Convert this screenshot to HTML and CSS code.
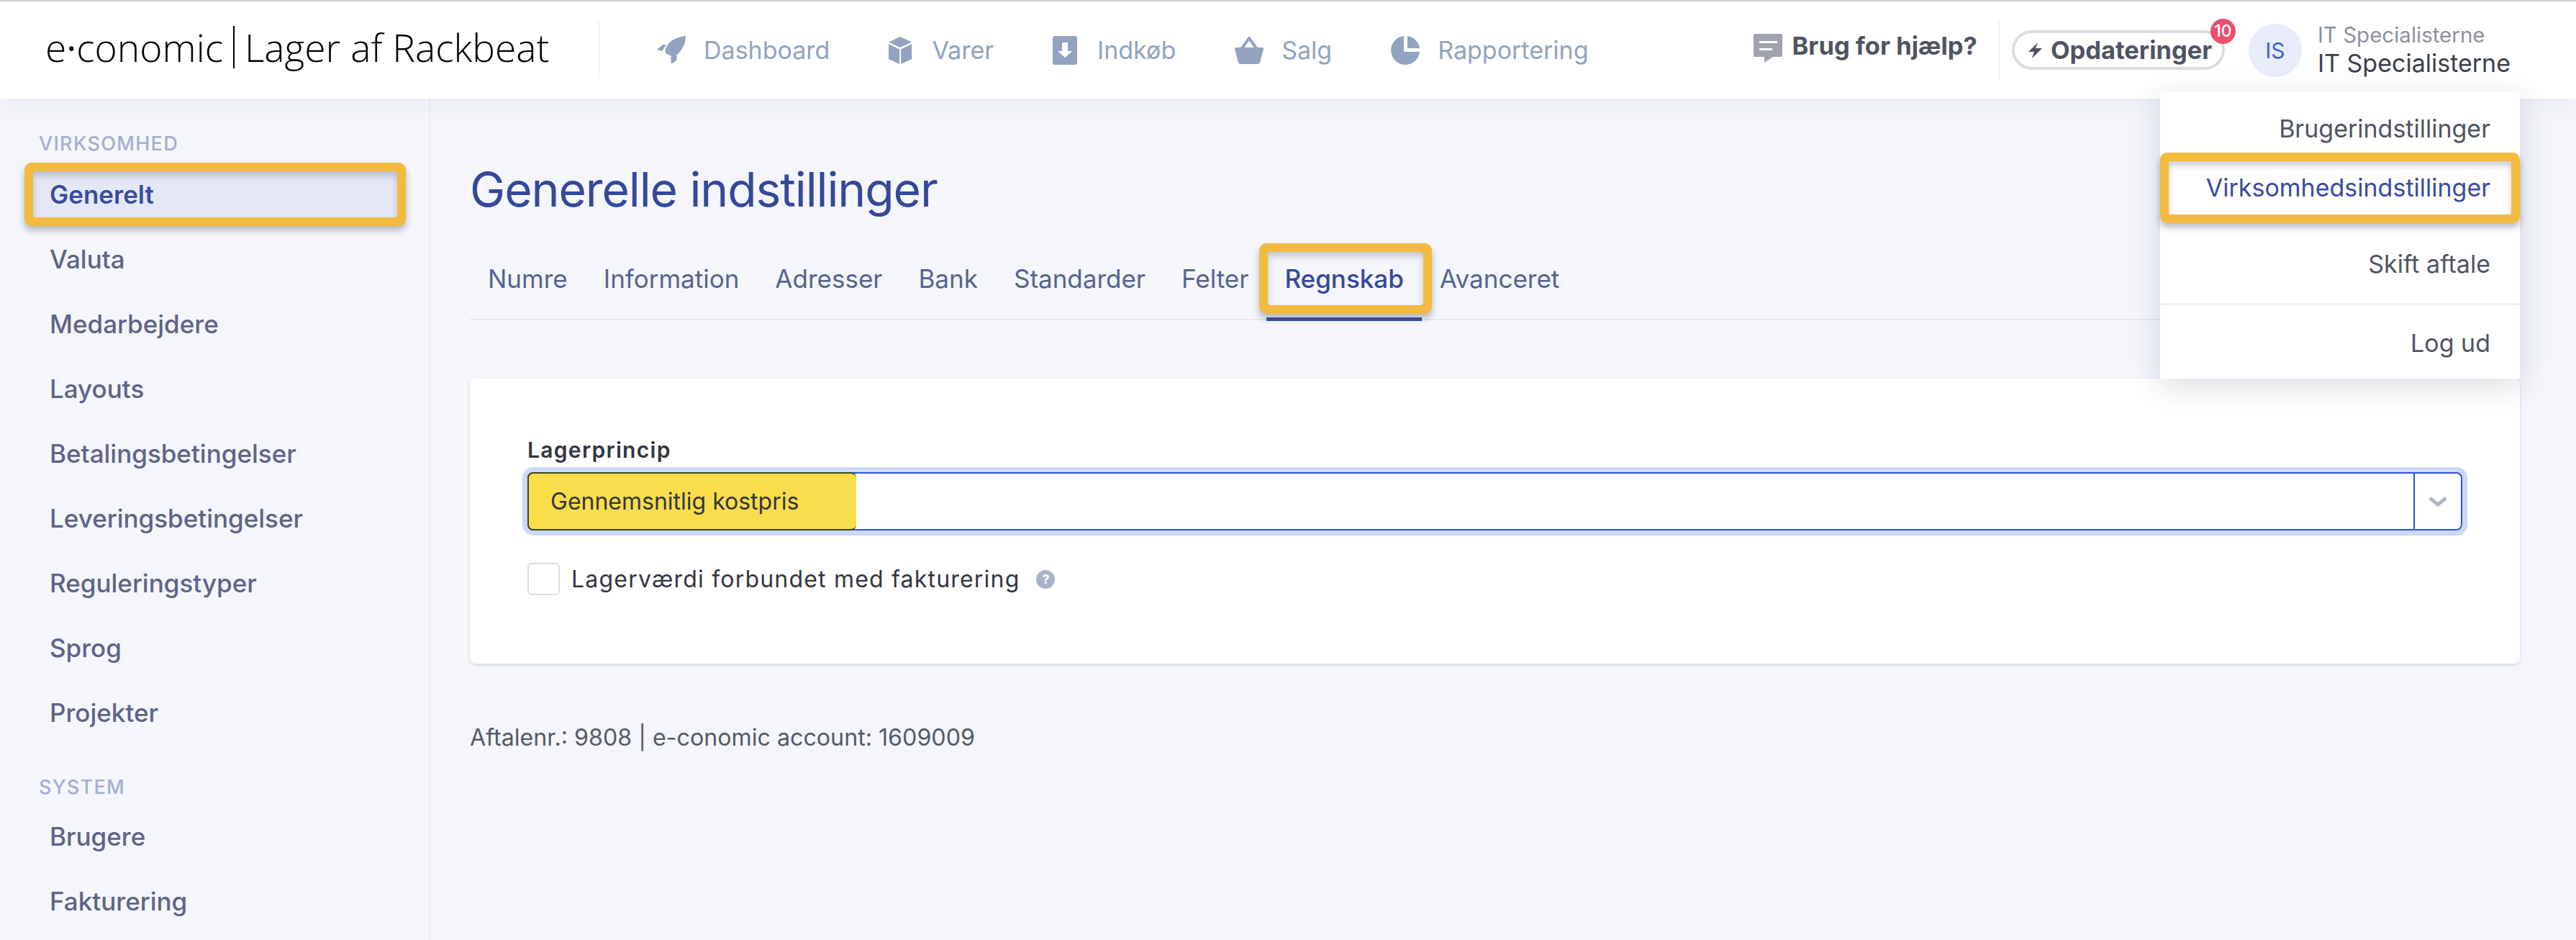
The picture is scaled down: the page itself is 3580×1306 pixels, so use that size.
FILE: index.html
```html
<!DOCTYPE html>
<html lang="en">
<head>
<meta charset="UTF-8">
<meta name="viewport" content="width=device-width, initial-scale=1.0">
<title>Generelle indstillinger</title>
<link rel="stylesheet" href="styles.css">
</head>
<body>
    <header class="topbar">
        <div class="logo">
            <span class="logo-brand">e<span class="logo-dot">·</span>conomic</span>
            <span class="logo-name">Lager af Rackbeat</span>
        </div>
        <nav class="mainnav">
            <a class="nav-item">
                <svg width="40" height="40" viewBox="0 0 40 40"><path d="M40 0C30 1 20 5 15 12C12 16 11 20 12 24L22 29C26 28 31 24 34 19C38 13 40 7 40 0Z"/><path d="M0 19L8 12H13L7 21Z"/><path d="M19 29L28 27L27 34L20 39Z"/></svg>
                <span>Dashboard</span>
            </a>
            <a class="nav-item">
                <svg class="icon-narrow" width="32" height="38" viewBox="0 0 32 38"><path d="M16 0L32 7.5L16 15L0 7.5Z"/><path d="M0 10L15 17.5V38L0 31Z"/><path d="M32 10L17 17.5V38L32 31Z"/></svg>
                <span>Varer</span>
            </a>
            <a class="nav-item">
                <svg class="icon-narrow" width="34" height="40" viewBox="0 0 34 40"><path fill-rule="evenodd" d="M3 0H31A3 3 0 0 1 34 3V37A3 3 0 0 1 31 40H3A3 3 0 0 1 0 37V3A3 3 0 0 1 3 0ZM13 9V21H7L17 30L27 21H21V9Z"/></svg>
                <span>Indkøb</span>
            </a>
            <a class="nav-item">
                <svg width="40" height="38" viewBox="0 0 40 38"><path d="M2 15H38Q40 15 40 17L35 36Q34 38 32 38H8Q6 38 5 36L0 17Q0 15 2 15Z"/><path class="handle" d="M10 16L20 2L30 16"/></svg>
                <span>Salg</span>
            </a>
            <a class="nav-item">
                <svg width="40" height="40" viewBox="0 0 40 40"><path d="M18 0A20 20 0 1 0 40 22H18Z"/><path d="M23 0A20 20 0 0 1 40 17H23Z"/></svg>
                <span>Rapportering</span>
            </a>
        </nav>
        <div class="help">
            <svg width="40" height="40" viewBox="0 0 40 40"><path d="M2 0H38Q40 0 40 2V30Q40 32 38 32H27L15 40V32H2Q0 32 0 30V2Q0 0 2 0Z"/><rect class="help-line" x="8" y="10" width="25" height="3"/><rect class="help-line" x="8" y="20" width="18" height="3"/></svg>
            <span>Brug for hjælp?</span>
        </div>
        <div class="updates">
            <div class="updates-pill">
                <svg width="21" height="22" viewBox="0 0 21 22"><path d="M14 0L1 13H9L6 22L20 8H11Z"/></svg>
                <span>Opdateringer</span>
                <span class="badge">10</span>
            </div>
        </div>
        <div class="user">
            <div class="avatar">IS</div>
            <div class="user-names">
                <div class="user-small">IT Specialisterne</div>
                <div class="user-big">IT Specialisterne</div>
            </div>
        </div>
    </header>

    <div class="menu">
        <a class="menu-item">Brugerindstillinger</a>
        <a class="menu-item menu-active callout">Virksomhedsindstillinger</a>
        <a class="menu-item menu-switch">Skift aftale</a>
        <a class="menu-item menu-logout">Log ud</a>
    </div>

    <div class="page">
        <aside class="sidebar">
            <div class="side-title">VIRKSOMHED</div>
            <a class="side-item side-active callout">Generelt</a>
            <a class="side-item">Valuta</a>
            <a class="side-item">Medarbejdere</a>
            <a class="side-item">Layouts</a>
            <a class="side-item">Betalingsbetingelser</a>
            <a class="side-item">Leveringsbetingelser</a>
            <a class="side-item">Reguleringstyper</a>
            <a class="side-item">Sprog</a>
            <a class="side-item">Projekter</a>
            <div class="side-title side-title-2">SYSTEM</div>
            <a class="side-item">Brugere</a>
            <a class="side-item">Fakturering</a>
        </aside>

        <main class="content">
            <h1>Generelle indstillinger</h1>
            <div class="tabs">
                <a class="tab">Numre</a>
                <a class="tab">Information</a>
                <a class="tab">Adresser</a>
                <a class="tab">Bank</a>
                <a class="tab">Standarder</a>
                <a class="tab">Felter</a>
                <a class="tab tab-active">Regnskab<span class="tab-mark callout"></span></a>
                <a class="tab">Avanceret</a>
            </div>
            <section class="card">
                <label class="field-label">Lagerprincip</label>
                <div class="select">
                    <div class="select-value"><span class="select-mark">Gennemsnitlig kostpris</span></div>
                    <div class="select-arrow">
                        <svg width="26" height="16" viewBox="0 0 26 16"><path d="M2 3L13 12L24 3"/></svg>
                    </div>
                </div>
                <div class="check-row">
                    <span class="checkbox"></span>
                    <span class="check-label">Lagerværdi forbundet med fakturering</span>
                    <span class="help-dot">?</span>
                </div>
            </section>
            <p class="account">Aftalenr.: 9808 | e-conomic account: 1609009</p>
        </main>
    </div>
</body>
</html>
```

FILE: styles.css
```css
* {
    box-sizing: border-box;
}
html, body {
    margin: 0;
    height: 100%;
    overflow: hidden;
}
body {
    font-family: Inter, "Liberation Sans", sans-serif;
    background-color: #f4f6fb;
    color: #50545f;
}

/* top bar */
.topbar {
    position: relative;
    z-index: 2;
    display: flex;
    align-items: center;
    height: 137px;
    border-top: 2px solid #ccc;
    background-color: #fff;
    box-shadow: 0 6px 30px rgba(40, 50, 90, 0.06);
}
.logo {
    display: flex;
    align-items: center;
    width: 833px;
    height: 80px;
    padding: 0 0 9px 63px;
    border-right: 1px solid #e3e6ee;
    font-family: "Open Sans", sans-serif;
    font-weight: 300;
    font-size: 53.3px;
    color: #000;
    white-space: nowrap;
}
.logo-brand {
    padding-right: 14px;
    border-right: 2px solid #000;
    line-height: 59px;
}
.logo-dot {
    font-weight: 400;
}
.logo-name {
    padding-left: 14px;
}
.mainnav {
    display: flex;
    gap: 82px;
    padding-left: 80px;
}
.nav-item {
    display: flex;
    align-items: center;
    gap: 25px;
    font-size: 34px;
    color: #93a2bf;
}
.nav-item svg {
    fill: #93a2bf;
}
.nav-item .handle {
    fill: none;
    stroke: #93a2bf;
    stroke-width: 4;
}
.nav-item .icon-narrow {
    margin-right: 3px;
}
.help {
    display: flex;
    align-items: center;
    gap: 14px;
    height: 80px;
    margin-left: auto;
    padding-right: 30px;
    border-right: 1px solid #e3e6ee;
    font-size: 34.5px;
    font-weight: 700;
}
.help svg {
    margin-bottom: 6px;
    fill: #a0a3ab;
}
.help span {
    margin-bottom: 12px;
}
.help-line {
    fill: #fff;
}
.updates {
    padding: 0 33px 0 17px;
}
.updates-pill {
    position: relative;
    display: flex;
    align-items: center;
    gap: 11px;
    width: 296px;
    height: 55px;
    padding-left: 18px;
    border: 4px solid #ddd;
    border-radius: 28px;
    font-size: 34.5px;
    font-weight: 700;
    white-space: nowrap;
}
.updates-pill svg {
    fill: #50545f;
}
.badge {
    position: absolute;
    top: -20px;
    right: -19px;
    width: 35px;
    height: 35px;
    border-radius: 50%;
    background-color: #ee4d6e;
    color: #fff;
    font-size: 23px;
    font-weight: 500;
    line-height: 35px;
    text-align: center;
}
.user {
    display: flex;
    align-items: center;
    gap: 22px;
    padding-right: 91px;
}
.avatar {
    width: 74px;
    height: 74px;
    border-radius: 50%;
    background-color: #e8ecfb;
    color: #3f62c9;
    font-size: 30px;
    line-height: 74px;
    text-align: center;
}
.user-small {
    font-size: 29.5px;
    line-height: 36px;
    color: #8d909b;
}
.user-big {
    font-size: 34px;
    line-height: 44px;
    color: #3c3f48;
}
.user-names {
    white-space: nowrap;
}

/* account menu */
.menu {
    position: absolute;
    top: 127px;
    right: 78px;
    z-index: 3;
    width: 500px;
    height: 399px;
    padding-top: 15px;
    background-color: #fff;
    box-shadow: 0 10px 40px rgba(30, 40, 70, 0.16);
}
.menu-item {
    display: block;
    height: 74px;
    padding-right: 41px;
    font-size: 34px;
    line-height: 74px;
    text-align: right;
}
.menu-active {
    position: relative;
    margin: 8px 12px 0;
    padding-right: 29px;
    background-color: #fff;
    color: #3a4b9d;
}
.menu-switch {
    margin-top: 32px;
}
.menu-logout {
    height: 105px;
    margin-top: 17px;
    padding-top: 16px;
    border-top: 3px solid #f0f0f0;
}

/* shared orange callout */
.callout {
    border-radius: 3px;
    box-shadow: 0 0 0 12px #f2bb40, 0 6px 10px 12px rgba(30, 30, 60, 0.3), inset 0 6px 10px rgba(30, 30, 60, 0.22);
}

/* page */
.page {
    display: flex;
    height: calc(100% - 137px);
}
.sidebar {
    flex: 0 0 598px;
    padding: 45px 0 0 46px;
    border-right: 2px solid #ebedf3;
}
.side-title {
    height: 36px;
    margin-bottom: 20px;
    padding-left: 8px;
    font-size: 27px;
    font-weight: 500;
    line-height: 36px;
    letter-spacing: 1.3px;
    color: #a4aecf;
}
.side-title-2 {
    margin-top: 54px;
    margin-bottom: 18px;
}
.side-item {
    display: block;
    width: 506px;
    height: 64px;
    margin: 0 0 26px;
    padding-left: 23px;
    font-size: 35px;
    font-weight: 500;
    line-height: 64px;
    color: #5f6388;
}
.side-active {
    background-color: #e4e8f6;
    font-weight: 600;
    color: #3a4b9d;
}
.content {
    flex: 1;
    padding: 0 78px 0 55px;
}
h1 {
    margin: 86px 0 0;
    font-size: 66px;
    font-weight: 400;
    line-height: 80px;
    letter-spacing: -1.1px;
    color: #36489b;
}
.tabs {
    display: flex;
    align-items: flex-start;
    height: 105px;
    margin-top: 37px;
    border-bottom: 2px solid #e6e8ee;
}
.tab {
    position: relative;
    height: 106px;
    padding: 0 25px;
    font-size: 35px;
    line-height: 94px;
    color: #56638f;
}
.tab-active {
    font-weight: 500;
    color: #36489b;
    border-bottom: 5px solid #3f5299;
}
.tab-mark {
    position: absolute;
    top: 10px;
    left: 2px;
    width: 216px;
    height: 74px;
}
.card {
    height: 396px;
    margin-top: 81px;
    padding: 80px 80px 0;
    border-radius: 8px;
    background-color: #fff;
    box-shadow: 0 2px 4px rgba(30, 40, 70, 0.15);
}
.field-label {
    display: block;
    height: 50px;
    font-size: 30px;
    font-weight: 600;
    line-height: 38px;
    letter-spacing: 1.3px;
    color: #33363f;
}
.select {
    display: flex;
    height: 81px;
    border: 2px solid #2f55e0;
    border-radius: 8px;
    box-shadow: 0 0 0 7px #cdd7f7;
}
.select-value {
    flex: 1;
    border-right: 2px solid #2f55e0;
}
.select-mark {
    display: block;
    width: 457px;
    height: 81px;
    margin: -2px 0 0 -2px;
    padding-left: 30px;
    border: 2px solid #39491f;
    border-right: 0;
    border-radius: 8px;
    background-color: #f9dd4b;
    font-size: 32px;
    line-height: 77px;
    color: #33363f;
}
.select-arrow {
    display: flex;
    flex: 0 0 64px;
    align-items: center;
    justify-content: center;
}
.select-arrow path {
    fill: none;
    stroke: #b0b6c6;
    stroke-width: 5;
}
.check-row {
    display: flex;
    align-items: center;
    margin-top: 45px;
}
.checkbox {
    width: 45px;
    height: 45px;
    border: 2px solid #d9dce6;
    border-radius: 6px;
    background-color: #fff;
}
.check-label {
    margin-left: 16px;
    font-size: 32px;
    letter-spacing: 1.2px;
    color: #33363f;
}
.help-dot {
    width: 26px;
    height: 26px;
    margin-left: 23px;
    border-radius: 50%;
    background-color: #a9b2c9;
    color: #fff;
    font-size: 18px;
    font-weight: 700;
    line-height: 26px;
    text-align: center;
}
.account {
    margin: 84px 0 0;
    font-size: 32.2px;
    line-height: 38px;
    color: #555a66;
}
```
